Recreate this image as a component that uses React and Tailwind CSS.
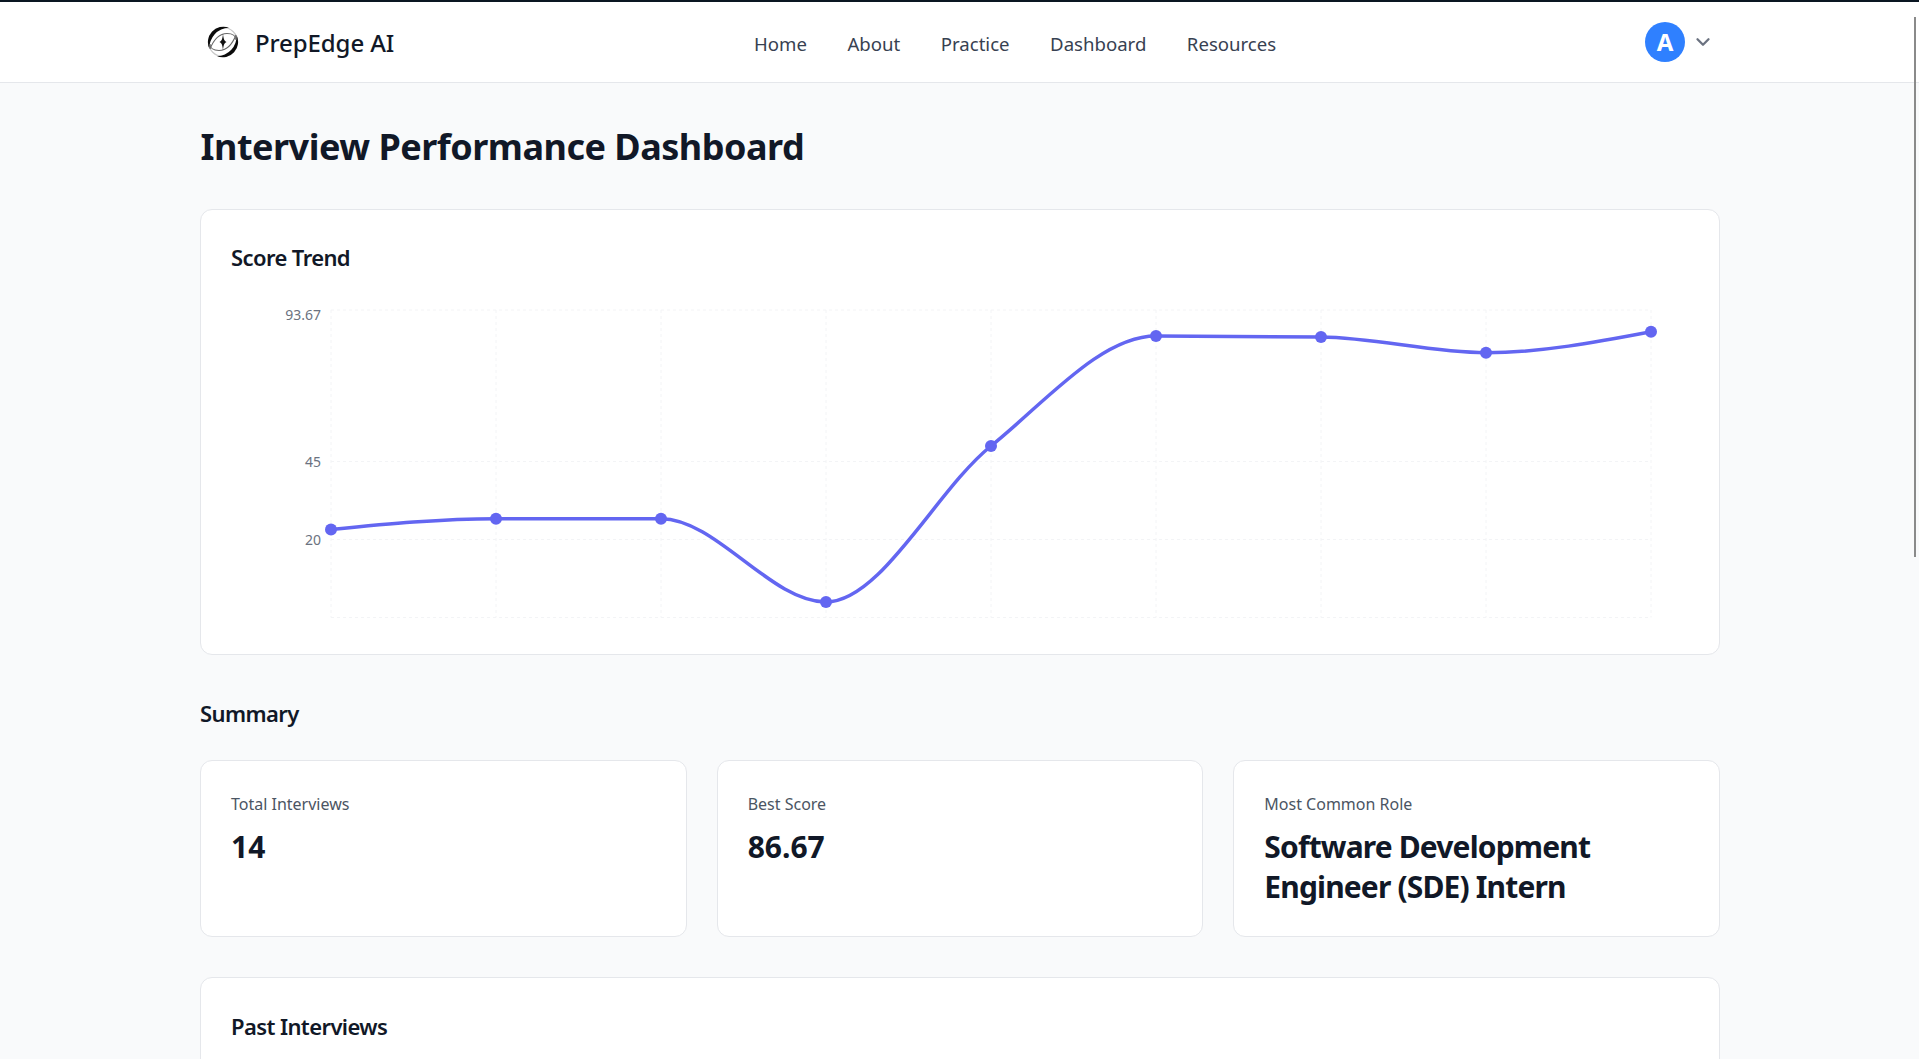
import React from "react";
import { ChevronDown } from "lucide-react";

const pts = [[331,529.5],[496,518.7],[661,518.7],[826,602],[991,446],[1156,336],[1321,337],[1486,352.7],[1651,331.7]].map(([x,y])=>[x-331,y-300]);

function monotonePath(p){
  const n=p.length; const sl=[]; const t=[];
  for(let i=0;i<n-1;i++) sl.push((p[i+1][1]-p[i][1])/(p[i+1][0]-p[i][0]));
  for(let i=1;i<n-1;i++){
    const h0=p[i][0]-p[i-1][0], h1=p[i+1][0]-p[i][0];
    const s0=sl[i-1], s1=sl[i];
    const q=(s0*h1+s1*h0)/(h0+h1);
    t[i]=((Math.sign(s0)+Math.sign(s1))||0)*Math.min(Math.abs(s0),Math.abs(s1),0.5*Math.abs(q));
  }
  t[0]=(3*sl[0]-t[1])/2; t[n-1]=(3*sl[n-2]-t[n-2])/2;
  let d=`M${p[0][0]},${p[0][1]}`;
  for(let i=0;i<n-1;i++){
    const h=(p[i+1][0]-p[i][0])/3;
    d+=`C${p[i][0]+h},${p[i][1]+h*t[i]} ${p[i+1][0]-h},${p[i+1][1]-h*t[i+1]} ${p[i+1][0]},${p[i+1][1]}`;
  }
  return d;
}

function Chart(){
  const ys=[10,161.5,239.5,317.5];
  const xs=[0,165,330,495,660,825,990,1155,1320];
  return (
    <svg width="1458" height="340" viewBox="-100 0 1458 340" className="block" style={{fontFamily:"'Noto Sans',sans-serif"}}>
      <g stroke="#f3f4f6" strokeWidth="1" strokeDasharray="3 3" fill="none">
        {ys.map(y=><line key={y} x1="0" x2="1320" y1={y} y2={y}/>)}
        {xs.map(x=><line key={x} x1={x} x2={x} y1="10" y2="317.5"/>)}
      </g>
      <g fill="#6b7280" fontSize="14" textAnchor="end">
        <text x="-10" y="20">93.67</text>
        <text x="-10" y="166.5">45</text>
        <text x="-10" y="244.5">20</text>
      </g>
      <path d={monotonePath(pts)} fill="none" stroke="#6366f1" strokeWidth="3.5"/>
      {pts.map(([x,y])=><circle key={x} cx={x} cy={y} r="6" fill="#6366f1"/>)}
    </svg>
  );
}

function Logo(){
  return (
    <svg width="36" height="36" viewBox="0 0 36 36" className="shrink-0">
      <circle cx="18" cy="18" r="14.5" fill="none" stroke="#c9c9c9" strokeWidth="1.2"/>
      <path d="M4.5,25 A15.5,15.5 0 0 1 24,3.7 A20,20 0 0 0 4.5,25Z" fill="#0b0b0b"/>
      <path d="M31.5,11 A15.5,15.5 0 0 1 12,32.3 A20,20 0 0 0 31.5,11Z" fill="#0b0b0b"/>
      <path d="M5,25 C9,15 15,9.5 22,9.5 C28,9.5 31,12.5 31,16" fill="none" stroke="#666" strokeWidth="1.1"/>
      <path d="M31,11 C27,21 21,26.5 14,26.5 C8,26.5 5,23.5 5,20" fill="none" stroke="#666" strokeWidth="1.1"/>
      <path d="M18,9.5 C18.5,15 19.2,17 21.5,18 C19.2,19 18.5,21 18,26.5 C17.5,21 16.8,19 14.5,18 C16.8,17 17.5,15 18,9.5Z" fill="#111"/>
    </svg>
  );
}

function Stat({label,children}){
  return (
    <div className="bg-white border border-[#e5e7eb] rounded-xl px-[30px] pt-[31px] h-[177px]">
      <div className="text-[16px] leading-[24px] text-[#4b5563]">{label}</div>
      <div className="text-[30px] leading-[40px] font-bold text-[#111827] mt-[11px]">{children}</div>
    </div>
  );
}

const sectionTitle = "text-[22px] leading-[36px] font-semibold tracking-[-0.6px] text-[#111827]";

export default function App(){
  return (
    <div className="relative h-[1059px] overflow-hidden bg-[#f9fafb]" style={{fontFamily:"'Noto Sans',sans-serif"}}>
      <div className="h-[2px] bg-[#0a1622]"/>
      <header className="h-[81px] bg-white border-b border-[#e5e7eb] flex items-center pl-[200px]">
        <div className="w-[1520px] flex items-center justify-between pl-[5px] pr-[6px]">
          <div className="flex items-center gap-[14px]">
            <Logo/>
            <span className="text-[24px] leading-[32px] font-medium tracking-[-0.1px] text-[#111827] mt-[2px]">PrepEdge AI</span>
          </div>
          <nav className="flex items-center gap-[40.5px] text-[18.6px] text-[#374151] mt-[4px] ml-[-9px]">
            <span>Home</span><span>About</span><span>Practice</span><span>Dashboard</span><span>Resources</span>
          </nav>
          <div className="flex items-center gap-[7px]">
            <div className="w-10 h-10 rounded-full bg-[#2f80ff] text-white flex items-center justify-center text-[24px] font-bold">A</div>
            <ChevronDown size={22} strokeWidth={2.5} className="text-[#6b7280]"/>
          </div>
        </div>
      </header>
      <main className="w-[1520px] ml-[200px] pt-[34px]">
        <h1 className="text-[36px] leading-[60px] font-bold tracking-[-0.5px] text-[#111827] pl-[0.5px]">Interview Performance Dashboard</h1>
        <section className="mt-[32px] bg-white border border-[#e5e7eb] rounded-xl h-[446px] pt-[29px] pl-[30px]">
          <h2 className={sectionTitle}>Score Trend</h2>
          <div className="mt-[25px]"><Chart/></div>
        </section>
        <h2 className={sectionTitle + " mt-[40px]"}>Summary</h2>
        <div className="grid grid-cols-3 gap-[30px] mt-[29px]">
          <Stat label="Total Interviews">14</Stat>
          <Stat label="Best Score">86.67</Stat>
          <Stat label="Most Common Role"><span className="tracking-[-0.85px]">Software Development Engineer (SDE) Intern</span></Stat>
        </div>
        <section className="mt-[40px] bg-white border border-[#e5e7eb] rounded-xl h-[300px] pt-[30px] pl-[30px]">
          <h2 className={sectionTitle}>Past Interviews</h2>
        </section>
      </main>
      <div className="absolute right-[3px] top-[17px] w-[2px] h-[540px] bg-[#8a8a8a]"/>
    </div>
  );
}
